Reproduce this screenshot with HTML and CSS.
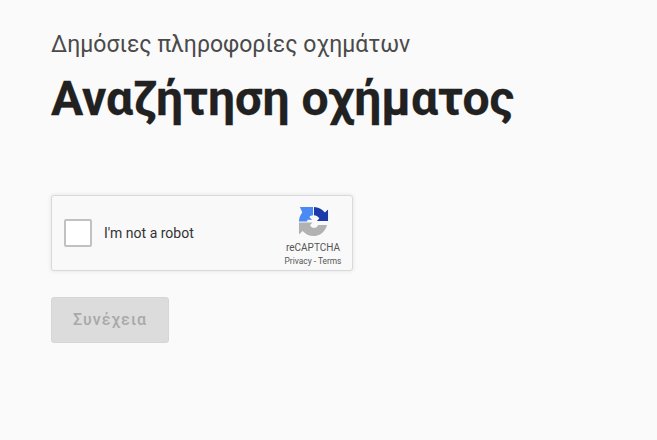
FILE: index.html
```html
<!DOCTYPE html>
<html lang="el">
<head>
    <meta charset="UTF-8">
    <title>Αναζήτηση οχήματος</title>
    <link rel="stylesheet" href="styles.css">
</head>
<body>
<div id="app">
    <header class="page-head">
        <div class="subtitle">Δημόσιες πληροφορίες οχημάτων</div>
        <h1 class="title">Αναζήτηση οχήματος</h1>
    </header>
    <div class="captcha">
        <span class="captcha-check"></span>
        <span class="captcha-label">I'm not a robot</span>
        <div class="captcha-brand">
            <svg class="captcha-logo" viewBox="0 0 32 32" width="31" height="31">
                <!-- grey arrow -->
                <path fill="#b2b2b2" d="M1 17H15L12.500 19.500C13.300 21.500 14.600 22.500 16.500 22.500C18.500 22.500 20 21.500 20.800 19.500H30C28 26.600 22.500 31 16 31C11.500 31 7.500 29 4.800 25.800L1 29.500Z"/>
                <!-- light blue arrow -->
                <path fill="#4a8af4" d="M1 16C1 12.400 2.300 9.200 4.400 6.600L2 1H15.500V9.500C13.800 9.600 12.600 10.200 11.700 11.400L14.500 14.200H9.800C9.600 14.800 9.500 15.400 9.500 16Z"/>
                <!-- dark blue arrow -->
                <path fill="#1c3aa9" d="M16.500 1C20.800 1 25 3.200 27.800 6.700L31 3.500V15.500H19.500L22 13C21 10.800 19 9.500 16.500 9.500Z"/>
            </svg>
            <span class="captcha-name">reCAPTCHA</span>
            <span class="captcha-links">Privacy - Terms</span>
        </div>
    </div>
    <button class="btn-next" disabled>Συνέχεια</button>
</div>
</body>
</html>
```

FILE: styles.css
```css
* {
    margin: 0;
    padding: 0;
    box-sizing: border-box;
}

html, body {
    width: 100%;
    height: 100%;
    overflow: hidden;
}

body {
    background: #fafafa;
    font-family: Roboto, "Liberation Sans", sans-serif;
}

#app {
    padding: 30px 0 0 51px;
}

.subtitle {
    font-size: 23px;
    line-height: 30px;
    color: #4a4a4a;
}

.title {
    font-size: 48px;
    line-height: 56px;
    font-weight: 700;
    color: #212121;
    margin-top: 11px;
    -webkit-text-stroke: 0.3px #212121;
}

.captcha {
    width: 302px;
    height: 76px;
    margin-top: 68px;
    background: #f9f9f9;
    border: 1px solid #d9d9d9;
    border-radius: 3px;
    box-shadow: 0 0 4px rgba(0, 0, 0, 0.1);
    display: flex;
    align-items: center;
    padding-left: 12px;
}

.captcha-check {
    width: 28px;
    height: 28px;
    background: #fff;
    border: 2px solid #c1c1c1;
    border-radius: 2px;
}

.captcha-label {
    font-size: 14px;
    color: #333;
    margin-left: 12px;
}

.captcha-brand {
    margin-left: auto;
    width: 70px;
    margin-right: 4px;
    display: flex;
    flex-direction: column;
    align-items: center;
    padding-top: 6px;
}

.captcha-logo {
    display: block;
}

.captcha-name {
    font-size: 10px;
    line-height: 12px;
    color: #555;
    margin-top: 5px;
}

.captcha-links {
    font-size: 8.400px;
    line-height: 10px;
    color: #555;
    margin-top: 2px;
    white-space: nowrap;
}

.btn-next {
    display: block;
    width: 118px;
    height: 46px;
    margin-top: 26px;
    padding-bottom: 2px;
    background: #dcdcdc;
    border: 1px solid #d6d6d6;
    border-radius: 3px;
    font-family: inherit;
    font-size: 16px;
    font-weight: 500;
    letter-spacing: 1px;
    color: #a9a9a9;
}
```
